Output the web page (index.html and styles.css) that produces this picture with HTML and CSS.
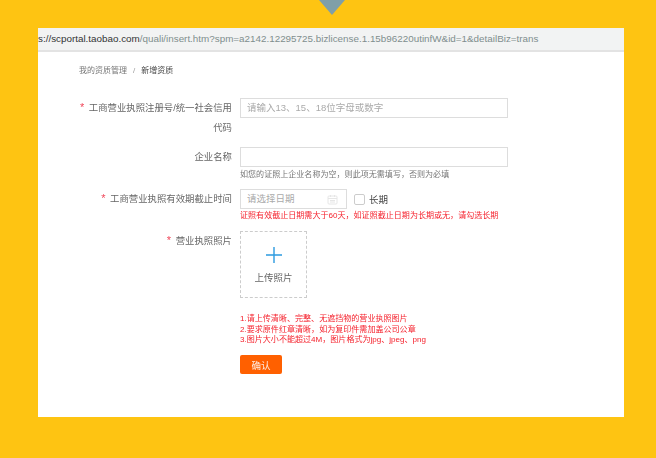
FILE: index.html
```html
<!DOCTYPE html>
<html lang="zh">
<head>
<meta charset="utf-8">
<title>新增资质</title>
<link rel="stylesheet" href="styles.css">
</head>
<body>
<div class="page">
  <div class="notch-wrap"><svg class="notch" width="26" height="15" viewBox="0 0 26 15"><polygon points="0,0 26,0 13,15" fill="#7f9fa8"/></svg></div>
  <main class="shot">
    <div class="urlbar"><span class="url-clip"><span class="host">s://scportal.taobao.com</span>/quali/insert.htm?spm=a2142.12295725.bizlicense.1.15b96220utinfW&amp;id=1&amp;detailBiz=trans</span></div>
    <div class="content">
      <div class="crumbs"><span>我的资质管理</span><span class="sep">/</span><span class="cur">新增资质</span></div>
      <div class="row row-first">
        <div class="label"><i>*</i> 工商营业执照注册号/统一社会信用代码</div>
        <div class="field"><div class="input wide">请输入13、15、18位字母或数字</div></div>
      </div>
      <div class="row row-name">
        <div class="label">企业名称</div>
        <div class="field"><div class="input wide"></div><p class="hint">如您的证照上企业名称为空，则此项无需填写，否则为必填</p></div>
      </div>
      <div class="row row-date">
        <div class="label"><i>*</i> 工商营业执照有效期截止时间</div>
        <div class="field">
          <div class="date-line">
            <div class="input date">请选择日期
              <svg class="cal" width="11" height="11" viewBox="0 0 11 11"><rect x="1" y="2" width="9" height="8" rx="1" fill="none" stroke="#e6e6e6"/><path d="M1 4.5h9M3.5 1v2M7.5 1v2M3 6.5h5M3 8h5" stroke="#e6e6e6" fill="none"/></svg>
            </div>
            <span class="check"></span><span class="long">长期</span>
          </div>
          <p class="err">证照有效截止日期需大于60天，如证照截止日期为长期或无，请勾选长期</p>
        </div>
      </div>
      <div class="row row-upload">
        <div class="label"><i>*</i> 营业执照照片</div>
        <div class="field">
          <div class="upload">
            <svg class="plus" width="16" height="16" viewBox="0 0 16 16"><path d="M8 0v16M0 8h16" stroke="#2d9be0" stroke-width="1.4" fill="none"/></svg>
            <span>上传照片</span>
          </div>
          <div class="notes">
            <p>1.请上传清晰、完整、无遮挡物的营业执照图片</p>
            <p>2.要求原件红章清晰，如为复印件需加盖公司公章</p>
            <p>3.图片大小不能超过4M，图片格式为jpg、jpeg、png</p>
          </div>
          <button class="ok" type="button">确认</button>
        </div>
      </div>
    </div>
  </main>
</div>
</body>
</html>
```

FILE: styles.css
```css
* { box-sizing: border-box; }
html, body { margin: 0; padding: 0; }
body { width: 656px; height: 458px; overflow: hidden; background: #fec412; font-family: "Liberation Sans", "Noto Sans CJK SC", sans-serif; }
.page { width: 656px; height: 458px; display: flex; flex-direction: column; align-items: center; }
.notch-wrap { height: 28px; width: 100%; display: flex; justify-content: center; padding-left: 8px; }
.notch { display: block; }
.shot { width: 586px; height: 389px; margin-left: 6px; background: #fff; display: flex; flex-direction: column; }
.urlbar { height: 24px; background: #f2f3f3; border-bottom: 2px solid #e3e3e3; font-size: 9.85px; line-height: 21px; color: #7f8e8e; overflow: hidden; white-space: nowrap; flex: none; }
.host { color: #333; }
.content { padding: 0 0 0 41px; flex: 1; filter: blur(0.35px); }
.crumbs { font-size: 8px; line-height: 12px; color: #777; margin-top: 13px; display: flex; }
.crumbs .sep { margin: 0 6px; color: #999; }
.crumbs .cur { color: #444; }
.row { display: flex; align-items: flex-start; }
.label { width: 153px; flex: none; text-align: right; font-size: 9.4px; line-height: 20px; color: #666; }
.label i { color: #f0475a; font-style: normal; font-size: 11px; line-height: 0; margin-right: 2px; }
.field { margin-left: 8px; flex: none; }
.row-first { margin-top: 21px; height: 49px; }
.row-name { height: 42px; }
.row-date { height: 42px; }
.input { height: 20px; border: 1px solid #ddd; background: #fff; font-size: 9.5px; line-height: 18px; color: #aaa; padding-left: 6px; }
.wide { width: 268px; }
.hint { margin: 2px 0 0; font-size: 8.05px; line-height: 11px; color: #777; }
.date-line { display: flex; align-items: center; }
.date { width: 107px; position: relative; display: flex; justify-content: space-between; align-items: center; padding-right: 8px; }
.cal { flex: none; }
.check { width: 11px; height: 11px; margin-left: 7px; border: 1px solid #ccc; border-radius: 2px; }
.long { margin-left: 4px; font-size: 9.5px; color: #444; }
.err { margin: 1px 0 0; font-size: 8.05px; line-height: 11px; color: #f5222d; white-space: nowrap; }
.upload { width: 67px; height: 67px; border: 1px dashed #ccc; display: flex; flex-direction: column; align-items: center; padding-top: 15px; font-size: 9.5px; color: #666; }
.plus { display: block; margin-bottom: 7px; }
.notes { margin-top: 16px; font-size: 8.05px; line-height: 10.5px; color: #f5222d; }
.notes p { margin: 0; white-space: nowrap; }
.ok { display: block; margin-top: 9.5px; width: 42px; height: 19px; padding: 0; border: 0; border-radius: 2px; background: #ff6000; color: #fff0e6; font: 9.5px "Liberation Sans", "Noto Sans CJK SC", sans-serif; }
```
